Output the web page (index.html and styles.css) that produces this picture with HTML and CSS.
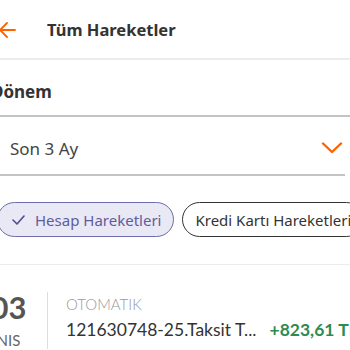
FILE: index.html
```html
<!DOCTYPE html>
<html lang="tr">
<head>
    <meta charset="UTF-8">
    <title>Tüm Hareketler</title>
    <link rel="stylesheet" href="styles.css">
</head>
<body>
    <div class="screen">
        <div class="header">
            <svg class="back" width="18" height="18" viewBox="0 0 18 18">
                <path d="M17 9H2M9 2L2 9l7 7" fill="none" stroke="#ff6200" stroke-width="1.8" stroke-linecap="round" stroke-linejoin="round"/>
            </svg>
            <span class="title">Tüm Hareketler</span>
        </div>

        <div class="period">
            <div class="label">Dönem</div>
            <div class="select">
                <span>Son 3 Ay</span>
                <svg width="22" height="12" viewBox="0 0 22 12">
                    <path d="M2 1.5l9 8.5 9-8.5" fill="none" stroke="#ff6200" stroke-width="2.4" stroke-linecap="round" stroke-linejoin="round"/>
                </svg>
            </div>
        </div>

        <div class="chips">
            <div class="chip active">
                <svg width="13" height="10" viewBox="0 0 13 10">
                    <path d="M1 5l4 4 7-8" fill="none" stroke="#4f4d8c" stroke-width="1.6" stroke-linecap="round" stroke-linejoin="round"/>
                </svg>
                Hesap Hareketleri
            </div>
            <div class="chip">Kredi Kartı Hareketleri</div>
        </div>

        <div class="row">
            <div class="date">
                <div class="day">03</div>
                <div class="month">NIS</div>
            </div>
            <div class="info">
                <div class="type">OTOMATIK</div>
                <div class="line">
                    <span class="desc">121630748-25.Taksit T...</span>
                    <span class="amount">+823,61 TL</span>
                </div>
            </div>
        </div>
    </div>
</body>
</html>
```

FILE: styles.css
```css
* {
    box-sizing: border-box;
}

body {
    margin: 0;
    background-color: #fff;
    font-family: "Noto Sans", Arial, sans-serif;
    color: #333;
    overflow: hidden;
}

.screen {
    margin-left: -12px;
    width: 400px;
}

.header {
    display: flex;
    align-items: center;
    height: 60px;
    padding-left: 10px;
    border-bottom: 2px solid #ececec;
}

.back {
    margin-top: 1px;
}

.title {
    margin-left: 31px;
    font-size: 16.5px;
    font-weight: bold;
    color: #333;
}

.period {
    padding: 20px 0 0 0;
}

.label {
    padding: 0 0 12px 3px;
    font-size: 17px;
    font-weight: bold;
    color: #333;
    border-bottom: 2px solid #c4c4c4;
}

.select {
    display: flex;
    align-items: center;
    justify-content: space-between;
    width: 357px;
    height: 59px;
    padding: 5px 2px 0 22px;
    font-size: 17px;
    color: #444;
    border-bottom: 2px solid #c4c4c4;
}

.chips {
    display: flex;
    gap: 8px;
    padding: 26px 0 0 9px;
    white-space: nowrap;
}

.chip {
    display: flex;
    align-items: center;
    gap: 10px;
    height: 35px;
    padding: 0 12px;
    border: 1.5px solid #333;
    border-radius: 18px;
    font-size: 15px;
    color: #333;
}

.chip.active {
    padding-left: 14px;
    padding-right: 12px;
    background-color: #e9e8f5;
    border-color: #6e6cab;
    color: #5e5c9d;
}

.row {
    display: flex;
    margin-top: 27px;
    padding-top: 27px;
    border-top: 1.5px solid #ececec;
    font-family: Lato, "Noto Sans", sans-serif;
}

.date {
    width: 60px;
    text-align: center;
    border-right: 1px solid #ddd;
    padding-right: 18px;
}

.day {
    font-size: 31px;
    line-height: 30px;
    font-weight: bold;
    color: #555;
}

.month {
    margin-top: 9px;
    font-size: 15px;
    color: #666;
}

.info {
    padding-top: 3px;
    padding-left: 18px;
}

.type {
    font-size: 15px;
    font-weight: 300;
    color: #999;
}

.line {
    display: flex;
    gap: 13px;
    margin-top: 6px;
    font-size: 17.5px;
    white-space: nowrap;
}

.desc {
    color: #333;
}

.amount {
    color: #2e8b50;
    font-weight: bold;
}
```
